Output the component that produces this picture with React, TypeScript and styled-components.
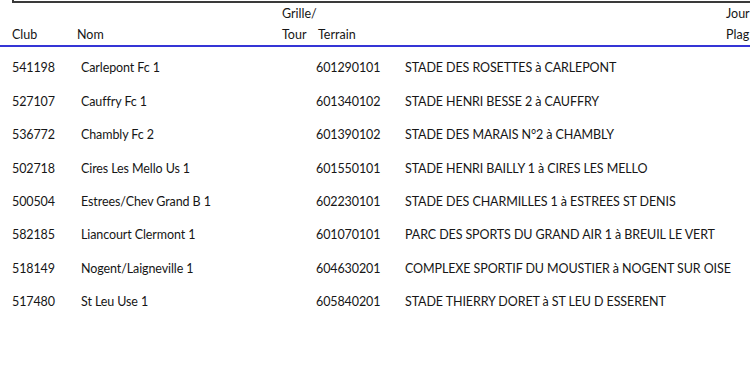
import styled, { createGlobalStyle } from "styled-components";

type Match = {
  club: string;
  nom: string;
  terrain: string;
  stade: string;
};

const matches: Match[] = [
  { club: "541198", nom: "Carlepont Fc 1", terrain: "601290101", stade: "STADE DES ROSETTES à CARLEPONT" },
  { club: "527107", nom: "Cauffry Fc 1", terrain: "601340102", stade: "STADE HENRI BESSE 2 à CAUFFRY" },
  { club: "536772", nom: "Chambly Fc 2", terrain: "601390102", stade: "STADE DES MARAIS N°2 à CHAMBLY" },
  { club: "502718", nom: "Cires Les Mello Us 1", terrain: "601550101", stade: "STADE HENRI BAILLY 1 à CIRES LES MELLO" },
  { club: "500504", nom: "Estrees/Chev Grand B 1", terrain: "602230101", stade: "STADE DES CHARMILLES 1 à ESTREES ST DENIS" },
  { club: "582185", nom: "Liancourt Clermont 1", terrain: "601070101", stade: "PARC DES SPORTS DU GRAND AIR 1 à BREUIL LE VERT" },
  { club: "518149", nom: "Nogent/Laigneville 1", terrain: "604630201", stade: "COMPLEXE SPORTIF DU MOUSTIER à NOGENT SUR OISE" },
  { club: "517480", nom: "St Leu Use 1", terrain: "605840201", stade: "STADE THIERRY DORET à ST LEU D ESSERENT" },
];

const GlobalStyle = createGlobalStyle`
  html, body {
    margin: 0;
    padding: 0;
    background: #fff;
  }
  body {
    font-family: Lato, "Open Sans", sans-serif;
    color: #161616;
    overflow: hidden;
  }
`;

const Page = styled.div`
  width: 750px;
  height: 366px;
  overflow: hidden;
`;

const FrameEdge = styled.div`
  margin-left: 12px;
  height: 1px;
  border-left: 2px solid #3a3a3a;
  border-bottom: 2px solid #3a3a3a;
`;

const Header = styled.div`
  display: grid;
  grid-template-columns: 65px 205px 36px 408px 1fr;
  grid-template-rows: 21px 21px;
  padding-left: 12px;
  border-bottom: 2px solid #3535d6;
  font-size: 12.5px;
  line-height: 21px;
  white-space: nowrap;
`;

const HeadCell = styled.div<{ $row: number; $col: number }>`
  grid-row: ${(p) => p.$row};
  grid-column: ${(p) => p.$col};
`;

const Body = styled.div`
  padding-top: 4px;
`;

const Row = styled.div`
  display: grid;
  grid-template-columns: 69px 235px 89px 1fr;
  height: 33.45px;
  align-items: center;
  padding-left: 12px;
  font-size: 12.5px;
  letter-spacing: -0.1px;
  white-space: nowrap;
`;

export default function App() {
  return (
    <Page>
      <GlobalStyle />
      <FrameEdge />
      <Header>
        <HeadCell $row={1} $col={3}>Grille/</HeadCell>
        <HeadCell $row={1} $col={5}>Jour</HeadCell>
        <HeadCell $row={2} $col={1}>Club</HeadCell>
        <HeadCell $row={2} $col={2}>Nom</HeadCell>
        <HeadCell $row={2} $col={3}>Tour</HeadCell>
        <HeadCell $row={2} $col={4}>Terrain</HeadCell>
        <HeadCell $row={2} $col={5}>Plag</HeadCell>
      </Header>
      <Body>
        {matches.map((m) => (
          <Row key={m.club}>
            <span>{m.club}</span>
            <span>{m.nom}</span>
            <span>{m.terrain}</span>
            <span>{m.stade}</span>
          </Row>
        ))}
      </Body>
    </Page>
  );
}
